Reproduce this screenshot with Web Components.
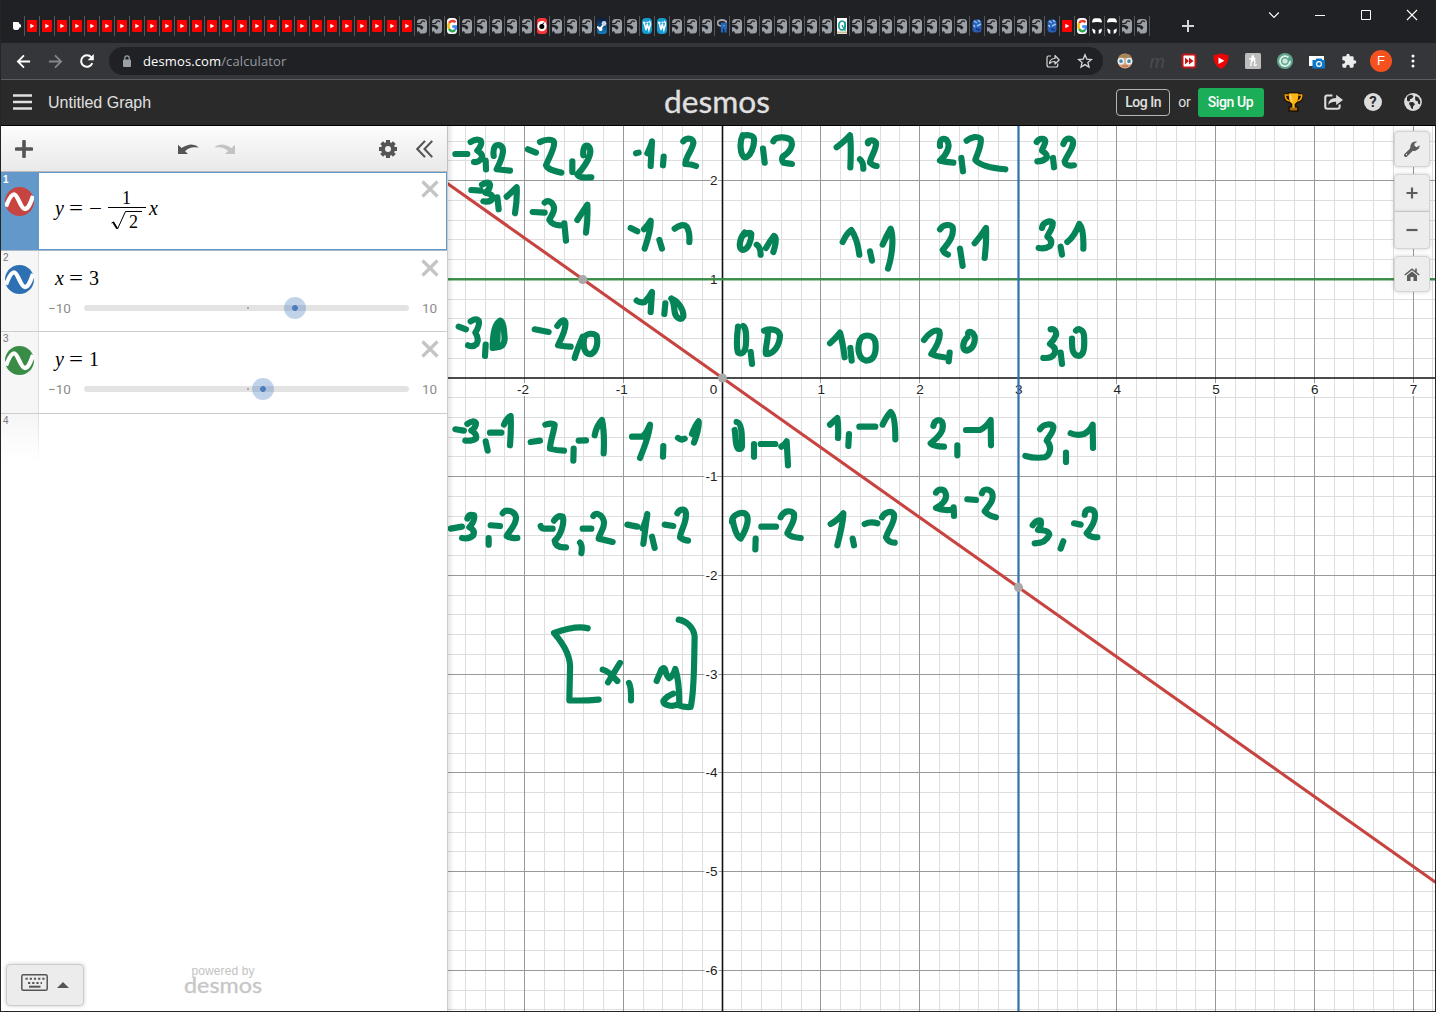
<!DOCTYPE html>
<html lang="en">
<head>
<meta charset="utf-8">
<title>Desmos | Graphing Calculator</title>
<style>
html,body{margin:0;height:100%;background:#1b1b1c;overflow:hidden}
body{font-family:"Liberation Sans",Arial,sans-serif}
</style>
</head>
<body>
<browser-window></browser-window>
<script>
const define = (name, css, html, extra) => customElements.define(name, class extends HTMLElement {
  constructor() {
    super();
    const root = this.attachShadow({ mode: 'open' });
    root.innerHTML = `<style>*{box-sizing:border-box}${css}</style>` + (typeof html === 'function' ? html(this) : html);
    if (extra) extra(this, root);
  }
});

/* ---------- icons ---------- */
const ICONS = {
  cup: ['0 0 10 16', '<path d="M1 4h5q1 0 1.500 2l1.500 .7v2.500l-1.500 .4q-.5 2.400-2 2.400h-2.500q-2 0-2-3z" fill="#fff"/>'],
  yt: ['0 0 10 16', '<rect y="2" width="10" height="12" rx="1" fill="#f00"/><path d="M3.300 5.800v4.400L7.300 8z" fill="#fff"/>'],
  globe: ['0 0 10 16', '<rect y="1" width="10" height="14.500" rx="3.500" fill="#9aa0a6"/><path d="M0 5.300Q4 6.200 4.500 4T8 3.600" fill="none" stroke="#202124" stroke-width="1.300"/><path d="M0 6.500L4.500 7.500 6.500 9.300 5 11.800 3.800 11 2.600 9.500 0 9z" fill="#202124"/><path d="M1 13.500l1.500 2" stroke="#202124" stroke-width="1.500"/>'],
  google: ['0 0 10 16', '<rect width="10" height="16" rx="3.500" fill="#fff"/><g fill="none" stroke-width="2.500"><path d="M8.500 4.200Q5 1.500 2 5" stroke="#ea4335"/><path d="M2 5Q1 8 2 11" stroke="#fbbc05"/><path d="M2 11q3 4 6 1" stroke="#34a853"/><path d="M8 12Q9 10.500 8.800 8.500H5.200" stroke="#4285f4"/></g>'],
  red: ['0 0 10 16', '<rect width="10" height="16" rx="3" fill="#f33"/><ellipse cx="5" cy="8" rx="4.600" ry="5.200" fill="#fff"/><circle cx="4.800" cy="8.600" r="2.500"/><path d="M5 7l2-2.500" stroke="#000"/>'],
  steam: ['0 0 10 16', '<defs><linearGradient id="s" x2="0" y2="1"><stop stop-color="#0c1a45"/><stop offset="1" stop-color="#1380bd"/></linearGradient></defs><rect width="10" height="16" rx="3" fill="url(#s)"/><path d="M0 9l4 2M7 6l-4 5" stroke="#fff" stroke-width="2"/><circle cx="7" cy="5.500" r="2.400" fill="#c9d4e4"/><circle cx="3.500" cy="11" r="2" fill="#fff"/>'],
  wp: ['0 0 10 16', '<rect width="10" height="16" rx="4" fill="#159cd2"/><path d="M1 4.500h2.500M2.200 5l1.800 7 1.300-6 1.600 6 1.700-6Q8.500 4 7 3M4.500 4.500h2" fill="none" stroke="#fff" stroke-width="1.500"/>'],
  rlang: ['0 0 10 16', '<ellipse cx="5" cy="5" rx="4.500" ry="3" fill="none" stroke="#a3a5aa" stroke-width="2"/><path d="M5 14.500V6h4v3.500H5M8.500 10v4.500" fill="none" stroke="#2067bd" stroke-width="2.300"/>'],
  quest: ['0 0 10 16', '<path fill="#fff" d="M0 0h10v16H0z"/><path d="M0 14.500h10" stroke="#cbbd9a" stroke-width="2"/><ellipse cx="5" cy="7.500" rx="3.200" ry="4.500" fill="none" stroke="#169b96" stroke-width="1.700"/><path d="M8 3.500v9.500M5 7l2 4" stroke="#169b96" stroke-width="1.300"/>'],
  blue: ['0 0 10 16', '<rect x=".5" y="1.500" width="9" height="13" rx="3.500" fill="#2b5fb5"/><path d="M2 3l3 2M6 2l2 2M1.500 7L3 9M5 8l4-2" stroke="#8fc4f5" stroke-width="1.500"/><path d="M4 11l4 1" stroke="#173b86" stroke-width="2"/>'],
  cat: ['0 0 10 16', '<path d="M0 4Q.5 .5 3 .3h4Q9.500 .5 10 4 9 5 8 4.300 5 3.800 2 4.300 1 5 0 4zM.3 10.500l3 1.500v4Q.5 15 .3 12zM9.700 10.500L6.700 12v4Q9.500 15 9.700 13z" fill="#fff"/>'],
  plus: ['0 0 16 16', '<path d="M8 2v12M2 8h12" stroke="currentColor" stroke-width="2"/>'],
  chev: ['0 0 12 12', '<path d="M1.200 3.500L6 8.500l4.800-5" fill="none" stroke="#fff" stroke-width="1.100"/>'],
  min: ['0 0 12 12', '<path d="M1 6.500h10" stroke="#fff"/>'],
  max: ['0 0 12 12', '<path d="M1.500 1.500h9v9h-9z" fill="none" stroke="#fff"/>'],
  close: ['0 0 12 12', '<path d="M1 1l10 10M11 1L1 11" stroke="#fff" stroke-width="1.100"/>'],
  back: ['0 0 16 16', '<path d="M15 8H2.500M8.500 1.500L2 8l6.500 6.500" fill="none" stroke="currentColor" stroke-width="1.900"/>'],
  reload: ['0 0 16 16', '<path d="M13.300 10.200a5.800 5.800 0 1 1-1-6" fill="none" stroke="#fff" stroke-width="2"/><path d="M14.800 1v6.200H8.600z" fill="#fff"/>'],
  lock: ['0 0 10 12', '<rect x="1" y="4.500" width="8" height="7.500" rx="1" fill="#9aa0a6"/><path d="M2.800 5V3a2.200 2.200 0 0 1 4.400 0v2" fill="none" stroke="#9aa0a6" stroke-width="1.200"/>'],
  share: ['0 0 16 16', '<path d="M6 3H3.500Q2 3 2 4.500v7.500Q2 14 4 14h7q1.800 0 1.800-2V10.500M4.500 10.500Q5 5.500 10 5.500V2.500l4.200 4.500-4.200 4V8.500Q6.500 8.300 4.500 10.500z" fill="none" stroke="#d5d6d8" stroke-width="1.200" stroke-linejoin="round"/>'],
  star: ['0 0 16 16', '<path d="M8 1.800l1.800 4.300 4.600.4-3.500 3 1.100 4.600L8 11.600l-4 2.500 1.100-4.600-3.500-3 4.600-.4z" fill="none" stroke="#d5d6d8" stroke-width="1.300"/>'],
  face: ['0 0 16 16', '<circle cx="8" cy="8" r="7.500" fill="#dda37e"/><path d="M1 7Q1 1 8 .8T15 7Q12 4 8 5 4 4 1 7z" fill="#a88558"/><circle cx="4" cy="8.200" r="2.600" fill="#4d879f" stroke="#e6f4fa" stroke-width="1.500"/><circle cx="12" cy="8.200" r="2.600" fill="#4d879f" stroke="#e6f4fa" stroke-width="1.500"/><path d="M5 13h6" stroke="#a06040"/>'],
  ff: ['0 0 16 16', '<rect x=".5" y=".5" width="15" height="15" rx="3" fill="#c01818"/><rect x="2.500" y="2.500" width="11" height="11" rx="1" fill="#fff"/><path d="M4 4.500L8 8l-4 3.500zM8 4.500L12.500 8 8 11.500z" fill="#c01818"/>'],
  shield: ['0 0 16 16', '<path d="M.5 2Q5 2 8 .3 11 2 15.500 2 16 12 8 16 0 12 .5 2z" fill="#ec0505"/><path d="M5.500 4.500v6.500L11.500 7.700z" fill="#fff"/>'],
  honey: ['0 0 16 16', '<rect width="16" height="16" rx="1.500" fill="#bdbdbd"/><path d="M5.800 13L7 4Q7.500 1.800 8.300 3T6.300 9Q9 6 9.700 7.500T9.300 11.500Q9.500 13.500 11.800 11.500M4 6.200Q7 5 10.500 5.500" fill="none" stroke="#fff" stroke-width="1.300"/>'],
  ring: ['0 0 16 16', '<circle cx="8" cy="8" r="8" fill="#62a58d"/><path d="M11.500 4.500A5 5 0 1 0 13 8" fill="none" stroke="#d9f3e6" stroke-width="1.800"/><circle cx="8" cy="8" r="2.600" fill="#cdeadf"/>'],
  camera: ['0 0 16 16', '<path d="M0 1h15v12H0z" fill="#fff"/><path d="M0 0h15v3H0z" fill="#333"/><path d="M3.500 7h3l1-1.500h5L13.500 7H16v8.500H3.500z" fill="#0b78c8"/><circle cx="10" cy="11" r="2.400" fill="none" stroke="#fff" stroke-width="1.200"/>'],
  puzzle: ['0 0 24 24', '<path d="M20.500 11H19V7a2 2 0 0 0-2-2h-4V3.500a2.500 2.500 0 0 0-5 0V5H4a2 2 0 0 0-2 2v3.800h1.500a2.700 2.700 0 0 1 0 5.400H2V20a2 2 0 0 0 2 2h3.800v-1.500a2.700 2.700 0 0 1 5.400 0V22H17a2 2 0 0 0 2-2v-4h1.500a2.500 2.500 0 0 0 0-5z" fill="#eceded"/>'],
  dots: ['0 0 4 14', '<g fill="#fff"><circle cx="2" cy="2" r="1.500"/><circle cx="2" cy="7" r="1.500"/><circle cx="2" cy="12" r="1.500"/></g>'],
  menu: ['0 0 18 16', '<path d="M0 1.500h18M0 8h18M0 14.500h18" stroke="#e0e0e0" stroke-width="2.500"/>'],
  trophy: ['0 0 18 20', '<path d="M4 1h10v3q0 7-3.500 8.500V15H13v4H5v-4h2.500v-2.500Q4 11 4 4z" fill="#fdb515" stroke="#180f00" stroke-width="1.500"/><path d="M4 3H1q0 6 4.500 6.500M14 3h3q0 6-4.500 6.500" fill="none" stroke="#180f00" stroke-width="3"/><path d="M4.500 3H1.200q0 5.500 4.300 6M13.500 3h3.300q0 5.500-4.300 6" fill="none" stroke="#f6a400" stroke-width="1.500"/><path d="M4.500 1.500h9v3Q12.500 11 9 12 5.500 11 4.500 4.500zM8 12h2v4H8z" fill="#fdb515"/><path d="M6.200 2.500q0 5 1.600 7" stroke="#ffe188" fill="none"/><path d="M5.500 15.800h7V18h-7z" fill="#ad6a16"/>'],
  share2: ['0 0 18 16', '<path d="M8 1.500H3Q1.200 1.500 1.200 3.500v9.300q0 2 2 2h9.600q2 0 2-2V10.500" fill="none" stroke="#ddd" stroke-width="2"/><path d="M4 11Q4 4.200 11.500 4V.8L18 6l-6.500 5V7.800Q6.500 7.500 4 11z" fill="#ddd"/>'],
  globe2: ['0 0 18 18', '<circle cx="9" cy="9" r="8.900" fill="#ddd"/><path d="M3 4Q5 1.500 8 1.800L9.500 3.500 8 5.500 5.800 6.200 6 8 4.200 8.600 3 7.500zM5.500 9.200L9 9l2 2.200-2 2.300V16Q7 16 6.500 13L5 11zM11.500 3L14.500 4.500 16.300 8 16 11.500 14 10.500 14 8.500 11.500 7.500 11 5.500z" fill="#2a2a2a"/>'],
  add: ['0 0 18 18', '<path d="M9 1.500v15M1.500 9h15" stroke="currentColor" stroke-width="3.600" stroke-linecap="round"/>'],
  undo: ['0 0 21 13', '<path d="M0 2v10h10L7 9Q12 3 21 5 14-2 3.600 5.400z" fill="currentColor"/>'],
  gear: ['-9 -9 18 18', '<circle r="5" fill="none" stroke="currentColor" stroke-width="4"/><path d="M0-9V-5M0 9V5M-9 0H-5M9 0H5M-6.360-6.360L-3.700-3.700M6.360 6.360L3.700 3.700M6.360-6.360L3.700-3.700M-6.360 6.360L-3.700 3.700" stroke="currentColor" stroke-width="4"/>'],
  collapse: ['0 0 16 18', '<path d="M8.500 .8L1.200 9l7.300 8.200M15.300 .8L8 9l7.300 8.200" fill="none" stroke="currentColor" stroke-width="2"/>'],
  x: ['0 0 18 18', '<path d="M1.500 1.500l15 15M16.500 1.500l-15 15" stroke="#c4c4c4" stroke-width="3.200"/>'],
  wrench: ['0 0 16 16', '<path d="M1.800 14.200L7.800 8.200" stroke="currentColor" stroke-width="3.600" stroke-linecap="round"/><path d="M13.300 .8A5 5 0 0 0 6.500 4.500Q6 7 6.500 8.500 8.500 10.500 11.500 9.700 15.500 8.500 15.800 4.300L12.500 6.200 10.300 4.500 10.600 2.500z" fill="currentColor"/><circle cx="2.500" cy="13.500" r=".7" fill="#eee"/>'],
  zin: ['0 0 12 12', '<path d="M6 .5v11M.5 6h11" stroke="currentColor" stroke-width="2.200"/>'],
  zout: ['0 0 12 12', '<path d="M.5 6h11" stroke="currentColor" stroke-width="2.200"/>'],
  home: ['0 0 16 13', '<path d="M.8 7L8 1.200 15.200 7M12 .5v4" fill="none" stroke="currentColor" stroke-width="1.600"/><path d="M3 7.500L8 3.500l5 4V13H9.500V9h-3v4H3z" fill="currentColor"/>'],
  keyboard: ['0 0 27 17', '<rect x=".8" y=".8" width="25.400" height="15.400" rx="1.500" fill="none" stroke="currentColor" stroke-width="1.500"/><path d="M4.500 4.800h19M7 9h14" stroke="currentColor" stroke-width="2" stroke-dasharray="2.200 2"/><path d="M8 12.700h11.500" stroke="currentColor" stroke-width="2"/>'],
  up: ['0 0 12 6', '<path d="M0 6L6 0l6 6z" fill="currentColor"/>'],
};
define('ui-icon', ':host{display:block;flex:none}svg{display:block;width:100%;height:100%}', el => {
  const [box, body] = ICONS[el.getAttribute('name')];
  return `<svg viewBox="${box}" preserveAspectRatio="none">${body}</svg>`;
}, el => { el.style.width = el.getAttribute('w') + 'px'; el.style.height = el.getAttribute('h') + 'px'; });
const icon = (n, w, h, cls = '') => `<ui-icon name="${n}" w="${w}" h="${h}" class="${cls}"></ui-icon>`;

/* ---------- browser chrome ---------- */
const rep = (n, k) => Array(k).fill(n);
const TABS = ['cup', ...rep('yt', 26), ...rep('globe', 2), 'google', ...rep('globe', 5), 'red', ...rep('globe', 3), 'steam',
  ...rep('globe', 2), 'wp', 'wp', ...rep('globe', 3), 'rlang', ...rep('globe', 7), 'quest', ...rep('globe', 8), 'blue',
  ...rep('globe', 4), 'blue', 'yt', 'google', 'cat', 'cat', ...rep('globe', 2)];
define('tab-strip', `
:host{display:flex;height:43px;background:#202124;color:#d5d6d8;padding-left:9px}
.tabs{display:flex;padding-top:16px}
.t{width:15px;height:20px;border-right:1px solid #55575b;display:flex;align-items:center;padding-left:2px}
.new{margin:18px 0 0 30px}
.win{margin-left:auto;display:flex;padding:9px 19px 0 0;gap:34px}
`, `<div class="tabs">${TABS.map(t => `<div class="t">${icon(t, 10, 16)}</div>`).join('')}</div>
<div class="new">${icon('plus', 16, 16)}</div>
<div class="win">${icon('chev', 12, 12)}${icon('min', 12, 12)}${icon('max', 12, 12)}${icon('close', 12, 12)}</div>`);

define('address-bar', `
:host{display:flex;align-items:center;height:37px;background:#35363a;border-bottom:1px solid #5c5d60;padding:0 20px 0 15px;font:13px "Open Sans",sans-serif}
.f{color:#85868a;transform:scaleX(-1);margin-left:16px}.b{color:#fff}.r{margin-left:16px}
.omni{display:flex;align-items:center;width:994px;height:28px;border-radius:14px;background:#202124;margin-left:14px;padding:0 10px 0 13px;color:#969ba1}
.url{margin-left:11px;letter-spacing:.12px;white-space:nowrap}.url b{font-weight:400;color:#fff}
.s{margin-left:auto}.st{margin-left:16px}
.ext{display:flex;align-items:center;gap:16px;margin-left:14px}
.m{width:16px;text-align:center;font:italic 18px/16px "Open Sans",sans-serif;color:#4c4d50}
.av{width:22px;height:22px;border-radius:50%;background:#f4511e;color:#fff;text-align:center;font:13px/22px "Liberation Sans";margin:0 -3px}
.d{margin-left:22px}
`, `${icon('back', 15, 15, 'b')}<span style="width:1px"></span>${icon('back', 15, 15, 'f')}${icon('reload', 16, 16, 'r')}
<div class="omni">${icon('lock', 10, 12)}<span class="url"><b>desmos.com</b>/calculator</span>${icon('share', 16, 16, 's')}${icon('star', 16, 16, 'st')}</div>
<div class="ext">${icon('face', 16, 16)}<span class="m">m</span>${icon('ff', 16, 16)}${icon('shield', 16, 16)}${icon('honey', 16, 16)}${icon('ring', 16, 16)}${icon('camera', 16, 16)}${icon('puzzle', 16, 16)}<span class="av">F</span></div>${icon('dots', 4, 14, 'd')}`);

/* ---------- Desmos header ---------- */
define('word-mark', ':host{display:block}svg{display:block}',
  el => {
    const w = +el.getAttribute('w'), s = +el.getAttribute('size');
    return `<svg width="${w}" height="${s * 1.1}" overflow="visible"><text x="0" y="${s * .85}" textLength="${w}" lengthAdjust="spacingAndGlyphs" font-family="Lato, sans-serif" font-size="${s}" font-weight="400" fill="currentColor" stroke="currentColor" stroke-width=".3">desmos</text></svg>`;
  });
define('site-header', `
:host{display:grid;grid-template-columns:1fr auto 1fr;align-items:center;height:46px;background:#2a2a2a;border-bottom:1px solid #000;color:#e0e0e0;padding:0 14px 1px 12px;font:14px Roboto,sans-serif}
.l,.r{display:flex;align-items:center}.l{font:16px "Liberation Sans",sans-serif;gap:16px}
.l span{padding-top:1px}
word-mark{margin:3px 2px 0 0}
.r{justify-content:flex-end;margin-right:1px}
.login{width:54px;height:27px;border:1px solid #b5b5b5;border-radius:4px;text-align:center;line-height:25px;font-weight:500;letter-spacing:-.45px}
.or{margin:0 7px 0 8px;letter-spacing:-.2px}
.sign{width:66px;height:29px;border-radius:3px;background:#1bad57;color:#fff;text-align:center;line-height:29px;font-weight:500;margin-right:20.500px;letter-spacing:-.4px}
.q{width:18px;height:18px;border-radius:50%;background:#ddd;color:#2a2a2a;font:bold 15px/18px Roboto,sans-serif;text-align:center;margin:0 22px 0 21px}
.sh{margin-left:21px}
`, `<div class="l">${icon('menu', 19, 16)}<span>Untitled Graph</span></div>
<word-mark w="106" size="30"></word-mark>
<div class="r"><span class="login">Log In</span><span class="or">or</span><span class="sign">Sign Up</span>${icon('trophy', 19, 20)}${icon('share2', 19, 16, 'sh')}<span class="q">?</span>${icon('globe2', 18, 18)}</div>`);

/* ---------- expression list ---------- */
define('value-slider', `
:host{display:flex;align-items:center;font:13.500px Roboto,sans-serif;color:#8c8c8c}
.lo{width:36px}.hi{margin-left:13px}
.track{width:325px;height:6px;border-radius:3px;background:#e3e3e3;position:relative}
.zero{position:absolute;left:163px;top:2px;width:2px;height:2px;background:#aaa}
.knob{position:absolute;top:-8px;width:22px;height:22px;border-radius:50%;background:radial-gradient(circle,#4a7ebe 0 2.600px,rgba(74,126,190,.34) 3.200px)}
`, el => `<span class="lo">−10</span><div class="track"><i class="zero"></i><i class="knob" style="left:${el.getAttribute('at')}px"></i></div><span class="hi">10</span>`);

define('expression-row', `
:host{display:flex;flex:none;height:82px;border-bottom:1px solid #ccc;background:#fff}
:host([n="2"]){height:81px}
.tab{width:38px;flex:none;background:#f6f6f6;border-right:1px solid #ddd;font:10px/11px "Liberation Sans",sans-serif;color:#757575;padding:1px 0 0 2px}
.dot{display:block;margin:2px 0 0 2px;width:29px;height:29px}
.main{flex:1;min-width:0;display:flex;flex-direction:column;padding:14px 0 0 9px}
.math{height:27px;padding-left:7px}
.body{display:flex;flex:1;min-width:0;position:relative}
.del{position:absolute;right:8px;top:8px}
::slotted(value-slider){margin-top:8px}
:host([active]){height:79px;border-bottom:1px solid #aeb9c8}
:host([active]) .tab{background:#6399ca;border:0;color:#fff;font-weight:bold;padding-top:2px}
:host([active]) .body{border:1px solid #5f97ca;border-left:0}
:host([active]) .main{padding:0 0 0 9px}
:host([active]) .math{margin-top:0}
:host([active]) .del{right:7px;top:7px}
:host([blank]){height:48px;border:0}:host([blank]) .tab{background:linear-gradient(#f6f6f6,#fff);border-image:linear-gradient(#ddd,#fff) 1}
`, el => {
  const c = el.getAttribute('color');
  return `<div class="tab">${el.getAttribute('n')}${c ? `<svg class="dot" viewBox="0 0 29 29"><circle cx="14.500" cy="14.500" r="14.500" fill="${c}"/><path d="M1 19.500C3.800 12 6.300 7.300 9 7.300C13 7.300 15.500 22 20 22C23.300 22 25.800 15.500 28 9" fill="none" stroke="#fff" stroke-width="4.300"/></svg>` : ''}</div>
<div class="body"><div class="main"><div class="math"><slot name="math"></slot></div><slot></slot></div>${c ? icon('x', 18, 18, 'del') : ''}</div>`;
});
define('math-text', ':host{display:block;font:20px/26px "Liberation Serif",serif;color:#000}svg{display:block;overflow:visible}',
  el => el.hasAttribute('fraction')
    ? `<svg width="110" height="70" font-family="Liberation Serif" font-size="20"><g><text x="0" y="42" font-style="italic">y</text><text x="14" y="42" textLength="14" lengthAdjust="spacingAndGlyphs">=</text><text x="34" y="42" textLength="13" lengthAdjust="spacingAndGlyphs">−</text><text x="67" y="31" font-size="18">1</text><text x="74" y="55" font-size="18">2</text><text x="94" y="42" font-style="italic">x</text></g><path d="M53 34.500h38" stroke="#000"/><path d="M56.500 50l2-1 4 7 8-17.500H87" fill="none" stroke="#000"/><path d="M58 49l4 6.500" stroke="#000" stroke-width="1.800"/></svg>`
    : `<svg width="60" height="26" font-family="Liberation Serif" font-size="20"><text x="0" y="20" font-style="italic">${el.getAttribute('lhs')}</text><text x="14" y="20" textLength="14" lengthAdjust="spacingAndGlyphs">=</text><text x="34" y="20">${el.getAttribute('rhs')}</text></svg>`);

define('expression-panel', `
:host{display:flex;flex-direction:column;width:447px;background:#fff;border-right:1px solid #ccc;color:#555}
.bar{display:flex;align-items:center;height:46px;background:linear-gradient(#fcfcfc,#e9e9e9);border-bottom:1px solid #bbb;padding:0 14px 0 14px;box-shadow:0 0 3px rgba(0,0,0,.15)}
.undo{margin-left:144.500px}.redo{margin-left:15px;transform:scaleX(-1);color:#c3c3c3}.gear{margin-left:auto}.col{margin-left:19px}
.foot{margin-top:auto;display:flex;height:47px;padding-left:5px}
.key{width:78px;height:42px;border:1px solid #ccc;border-radius:4px;background:#ececec;display:flex;align-items:center;justify-content:center;gap:9px;box-shadow:0 0 4px rgba(0,0,0,.2);padding-bottom:5px}
.key .up{margin-top:5px}
.pow{margin-left:100px;color:#c2c2c2;font:12px/13px "Liberation Sans",sans-serif;text-align:center}
.pow span{display:block;letter-spacing:.1px;padding-top:1px}
word-mark{color:#c6c6c6;margin-top:-3px}
`, `<div class="bar">${icon('add', 18, 18)}${icon('undo', 21, 12, 'undo')}${icon('undo', 21, 12, 'redo')}${icon('gear', 18, 18, 'gear')}${icon('collapse', 17, 18, 'col')}</div>
<expression-row n="1" color="#c74440" active><math-text slot="math" fraction></math-text></expression-row>
<expression-row n="2" color="#2d70b3"><math-text slot="math" lhs="x" rhs="3"></math-text><value-slider at="200"></value-slider></expression-row>
<expression-row n="3" color="#388c46"><math-text slot="math" lhs="y" rhs="1"></math-text><value-slider at="168"></value-slider></expression-row>
<expression-row n="4" blank></expression-row>
<div class="foot"><div class="key">${icon('keyboard', 27, 17)}${icon('up', 12, 6, 'up')}</div><div class="pow"><span>powered by</span><word-mark w="78" size="21"></word-mark></div></div>`);

/* ---------- graph ---------- */
/* Freehand pen strokes, three ink units per pixel, grouped by board area. */
const INK = [
 [0, 0, `M22 86L58 86M68 50Q86 38 98 46Q104 56 88 76Q108 88 100 100Q92 112 78 110M113 106L114 132M137 92C134 66 142 56 156 60C170 66 168 88 146 132Q170 134 186 136
 M240 72L264 82M276 50C290 42 314 40 318 50C322 66 306 90 294 120C300 134 320 138 340 142M373 108L373 140M406 90C404 70 410 58 420 62C432 72 432 98 388 148C396 160 416 156 430 156
 M564 84L572 82M598 84Q610 60 612 48L608 122M647 94L645 120M706 48C716 36 738 38 736 54C732 76 712 96 712 116Q730 116 744 122
 M70 194L98 196M102 178Q122 166 126 178Q126 192 112 202Q134 206 134 218Q128 232 106 228M148 216L152 252M176 214Q192 200 206 186Q208 220 201 264
 M254 260L290 262M290 232C300 222 314 230 318 246C320 264 306 276 304 284C310 296 326 300 336 300M349 294L354 346M388 284Q400 266 418 238Q420 280 414 322
 M548 308L568 318M588 312Q600 300 608 286Q610 310 590 370M634 344L642 370M680 310C692 300 708 296 716 304Q726 320 724 350
 M566 526Q576 534 590 530Q604 516 612 500L608 560M652 534L649 566M670 520C690 526 708 554 706 574C698 590 682 574 680 560C678 545 678 530 670 520
 M32 604L54 612M68 588Q84 578 92 586Q96 600 82 622Q94 640 86 656Q76 666 60 660M113 658L111 692M152 590C138 600 134 640 134 668C150 664 168 670 170 640C168 610 166 588 156 586M152 590Q148 620 148 650
 M260 612L302 620M328 602C338 586 348 580 352 590C356 612 340 640 330 660Q350 664 368 664M404 634Q388 670 380 698M408 640C404 670 412 690 430 686C448 676 450 650 446 632C436 622 418 624 410 634`],
 [272, 0, `M68 30C58 50 60 90 74 96C92 96 104 60 102 40C98 28 78 28 68 32M129 70L134 112M160 48C166 32 200 34 212 44C222 60 210 80 188 94Q184 104 190 112Q204 114 216 116
 M350 66Q376 46 390 30Q394 60 391 126M420 102Q430 110 430 130M444 54C440 44 460 42 468 52C470 74 450 96 450 112Q460 122 470 122
 M660 62C658 40 670 38 680 44C694 60 680 88 660 106Q678 110 700 112M724 98L729 138M740 46C754 34 774 32 782 40C786 60 772 84 766 104C780 120 810 128 856 132
 M950 50C958 38 974 38 976 48C976 58 966 70 966 76Q984 88 980 98Q970 108 952 108M999 98L1002 126M1030 56C1036 38 1050 36 1058 46C1064 64 1046 80 1034 108Q1036 124 1062 120
 M74 322C58 340 54 370 68 374C84 374 94 346 94 326C88 318 80 326 74 328M110 358Q122 366 122 388M138 368Q148 350 162 332Q174 336 160 380
 M368 350Q380 324 394 314Q412 340 418 388M450 378L456 406M488 358Q500 330 512 310C520 330 520 380 504 430
 M660 312C670 296 692 296 698 306C702 330 690 348 668 374Q672 384 684 388M720 370L728 422M764 354Q782 334 798 308Q800 350 794 398
 M966 308C968 290 990 284 998 292C1000 310 984 324 982 334Q1000 346 990 362Q976 372 956 368M1022 364L1026 388M1042 350Q1062 336 1078 296Q1092 310 1090 370
 M54 604C50 640 50 670 54 682C64 688 78 684 78 650C80 620 74 604 70 602M132 616C150 610 176 610 180 630C180 660 160 688 138 686C134 670 144 650 144 620M92 680L96 716
 M330 654Q346 640 360 622Q368 650 374 696M391 668L395 706M420 644C410 670 416 702 438 706C464 706 470 680 466 650C462 630 440 626 426 636
 M612 644C626 624 646 610 658 618C664 640 650 664 634 686Q650 694 672 696M689 682L686 708M742 636C726 650 726 676 740 676C760 672 766 650 764 634C758 618 744 616 744 624
 M992 612C1004 608 1010 620 1008 630Q1002 644 990 656Q1010 668 1004 684Q996 700 970 698M1022 682L1026 716M1056 640C1056 670 1056 690 1076 692C1094 690 1094 660 1092 630C1090 612 1074 608 1068 616`],
 [0, 240, `M22 192L48 196M58 176Q76 162 84 174Q84 186 70 196Q88 206 84 220Q74 228 52 226M113 228L119 256M126 202L160 202M168 178Q176 158 188 152Q190 190 186 240
 M248 230L276 226M292 178Q312 172 320 178C318 200 306 230 306 250Q326 256 348 256M377 250L376 286M392 226L414 225M440 210Q446 180 462 164Q470 200 467 264
 M552 214L584 214Q598 200 606 178Q604 210 576 278M646 242L645 274M690 218Q700 226 710 220M732 206Q742 180 752 168Q754 190 738 232
 M8 490L42 484M58 460Q62 446 78 450Q82 466 64 486Q82 494 76 510Q64 522 42 518M122 518L122 538M128 480L156 482M164 444C172 430 200 436 204 456C206 480 180 500 176 512Q190 520 208 518
 M278 482Q280 490 290 490L314 490M318 466Q330 448 344 454C350 470 340 510 320 526Q322 548 354 546M396 532Q404 540 400 564M404 490L430 490M436 452C442 440 464 446 468 470C470 490 456 500 452 520Q470 524 494 530
 M538 478L568 484M584 490Q596 460 598 446L586 536M612 514L620 548M650 478L676 482M688 444C696 428 712 430 714 444C716 474 698 494 696 516Q704 524 720 526`],
 [272, 240, `M50 170C66 172 66 210 66 244Q64 254 54 250C44 240 48 210 44 194M102 236L102 274M122 236L166 236M184 244Q196 236 200 228L204 300
 M330 178L352 158Q356 180 354 218M387 206L385 242M418 184L466 184M488 178Q500 152 512 140Q526 150 526 222
 M640 182C644 164 658 160 666 170C676 196 656 214 632 234Q640 244 672 244M712 240L712 270M738 194L780 194Q800 184 812 164L813 240
 M960 192C970 174 996 174 1000 184C1002 204 980 220 980 226C998 244 990 270 974 276Q944 280 916 272M1038 262L1038 290M1052 204Q1070 212 1092 206Q1110 196 1118 178L1119 248
 M36 470C34 450 60 440 74 444C90 452 84 484 62 520C50 516 40 480 38 462M107 520L106 552M124 484L168 484M182 456C192 434 214 434 222 446C226 470 208 486 202 504Q210 516 242 518
 M332 476Q352 466 370 444Q370 470 352 540M398 520L402 540M434 476Q452 468 472 474M486 456C494 440 514 434 522 448C526 470 506 490 498 516Q506 532 524 532
 M648 382C654 370 672 370 676 382C684 402 670 416 648 428Q668 436 690 434M701 426L702 452M742 402L768 404M786 384C790 368 808 370 816 382C824 406 806 420 794 438Q806 452 828 456
 M938 480Q950 462 962 466Q966 480 954 494Q986 494 988 508Q978 534 944 534M1030 528L1022 550M1062 474L1082 478M1094 448C1094 428 1118 428 1124 442C1130 468 1112 490 1100 504Q1112 518 1132 516`],
 [72, 465, `M203 114Q170 104 102 128C130 160 154 200 150 240L148 330Q190 332 236 328M248 238C270 244 282 262 292 272M300 218L264 276M327 278Q334 290 333 330M410 272L424 238Q432 228 436 240Q440 258 448 264Q460 256 466 236C474 260 478 300 478 340C460 352 430 346 430 332Q440 318 460 310M476 88C500 92 522 112 524 140C522 200 524 300 512 350Q490 352 474 344`],
];
define('graph-paper', ':host{display:block}svg{display:block}', () => {
  const U = 98.72, W = 987, H = 885, ox = 274.5, oy = 252, gx = 274.1;
  let minor = '', major = '', labels = '';
  for (let i = -14; i <= 36; i++) {
    const x = Math.floor(gx + i * U / 5) + .5, s = `M${x} 0V${H}`;
    if (i % 5) minor += s; else if (i) major += s;
  }
  for (let i = -32; i <= 12; i++) {
    const y = Math.floor(oy - i * U / 5) + .5, s = `M0 ${y}H${W}`;
    if (i % 5) minor += s; else if (i) major += s;
  }
  for (let i = -2; i <= 7; i++) labels += i
    ? `<text x="${ox + i * U - (i < 0 ? 2 : 0)}" y="268" text-anchor="middle">${i}</text>` : `<text x="265.500" y="268" text-anchor="middle">0</text>`;
  for (let i = -6; i <= 2; i++) if (i) labels += `<text x="269.500" y="${Math.round(oy - i * U + 4.5)}" text-anchor="end">${i}</text>`;
  const line = x => `${ox + x * U} ${oy + x * U / Math.SQRT2}`;
  return `<svg width="${W}" height="${H}">
<defs><linearGradient id="e"><stop stop-opacity=".1"/><stop offset="1" stop-opacity="0"/></linearGradient></defs>
<rect width="${W}" height="${H}" fill="#fff"/>
<path d="${minor}" stroke="#dedede"/><path d="${major}" stroke="#999"/>
<path d="M${ox} 0V${H}M0 252H${W}" stroke="#111" stroke-width="1.600"/>
<g font-family="Liberation Sans" font-size="13.500" fill="#222" stroke="#fff" stroke-width="3.500" stroke-linejoin="round" paint-order="stroke">${labels}</g>
<path d="M0 153.300H${W}" stroke="#388c46" stroke-width="2.500" opacity=".95"/>
<path d="M570.500 0V${H}" stroke="#2d70b3" stroke-width="2.300" opacity=".95"/>
<path d="M${line(-3)}L${line(7.5)}" stroke="#c74440" stroke-width="3.100"/>
<g fill="#a9a9a9"><circle cx="134.700" cy="153.500" r="4.500"/><circle cx="274.500" cy="252" r="4.500"/><circle cx="570.500" cy="461.200" r="4.500"/></g>
<g fill="none" stroke="#048457" stroke-linecap="round" stroke-linejoin="round" stroke-width="18.500">${INK.map(([x, y, d]) => `<path transform="translate(${x} ${y - .7}) scale(.33333)" d="${d}"/>`).join('')}</g>
<rect width="6" height="${H}" fill="url(#e)"/></svg>`;
});
define('tool-button', `:host{display:flex;width:36px;height:36px;align-items:center;justify-content:center;background:#ededed;border:1px solid #d4d4d4;border-radius:4px;color:#5d5d5d;box-shadow:0 0 4px rgba(0,0,0,.18)}
:host(.top){border-radius:4px 4px 0 0;height:38px}:host(.bot){border-radius:0 0 4px 4px;border-top:0;height:37px}`, '<slot></slot>');
define('graph-area', `:host{display:block;position:relative;width:987px;height:885px}
.tools{position:absolute;top:5px;right:5.500px;display:flex;flex-direction:column;gap:7px}`,
`<graph-paper></graph-paper><div class="tools"><tool-button>${icon('wrench', 16, 16)}</tool-button><div><tool-button class="top">${icon('zin', 12, 12)}</tool-button><tool-button class="bot">${icon('zout', 12, 12)}</tool-button></div><tool-button>${icon('home', 16, 13)}</tool-button></div>`);

define('browser-window', `
:host{display:flex;flex-direction:column;width:1436px;height:1012px;padding:0 1px 1px;background:#252526}
*{flex:none}
.work{display:flex;height:885px}
`, `<tab-strip></tab-strip><address-bar></address-bar><site-header></site-header><div class="work"><expression-panel></expression-panel><graph-area></graph-area></div>`);
</script>
</body>
</html>
